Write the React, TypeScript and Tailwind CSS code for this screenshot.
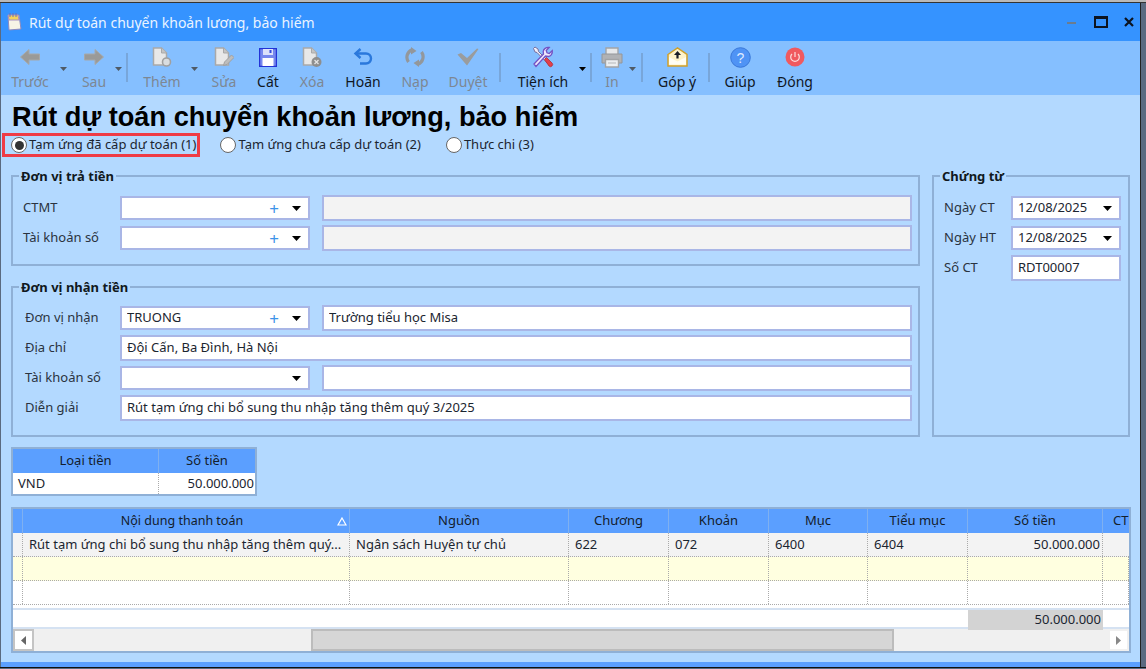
import type { ReactNode } from "react";

const FONT = "font-['Noto_Sans','Liberation_Sans',sans-serif]";

function Caret({ dim, small }: { dim?: boolean; small?: boolean }) {
  return (
    <svg width={small ? 7 : 9} height={small ? 4 : 5} viewBox="0 0 9 5" preserveAspectRatio="none">
      <path d="M0 0h9L4.500 5z" fill={dim ? "#4f5a66" : "#000"} />
    </svg>
  );
}

function ArrowLeft() {
  return (
    <svg width="20" height="16" viewBox="0 0 20 16">
      <path d="M0.500 8 9 0.500v4.500h10.500v6H9v4.500z" fill="#9a9a98" stroke="#a6a8a9" />
    </svg>
  );
}

function ArrowRight() {
  return (
    <svg width="20" height="16" viewBox="0 0 20 16">
      <path d="M19.500 8 11 0.500v4.500H0.500v6H11v4.500z" fill="#9a9a98" stroke="#a6a8a9" />
    </svg>
  );
}

function DocIcon({ badge }: { badge: "add" | "edit" | "del" }) {
  return (
    <svg width="20" height="20" viewBox="0 0 20 20">
      <path d="M1.500 1h8l5 5v12h-13z" fill="#e8e8e8" stroke="#a9a9a9" strokeWidth="1.500" />
      <path d="M9.500 1v5h5" fill="#c4c4c4" stroke="#a9a9a9" />
      {badge === "add" && <circle cx="14.500" cy="15" r="4" fill="#d9dde0" stroke="#a0a0a0" strokeWidth="1.600" />}
      {badge === "edit" && <path d="m9.500 18.500 1-3.500 7-7 2.500 2.500-7 7z" fill="#bdbdbd" stroke="#a0a0a0" />}
      {badge === "del" && (
        <>
          <circle cx="14.500" cy="15" r="5" fill="#8e8e8e" />
          <path d="m12.500 13 4 4m0-4-4 4" stroke="#e3e3e3" strokeWidth="1.300" />
        </>
      )}
    </svg>
  );
}

function SaveIcon() {
  return (
    <svg width="18" height="19" viewBox="0 0 18 19">
      <path d="M0.500 0.500h17v18h-17z" fill="#7688ee" stroke="#2333d6" strokeWidth="1.400" />
      <path d="M4 1h10v6H4z" fill="#dbe1fa" />
      <path d="M10.500 2h2v3h-2z" fill="#3348dc" />
      <path d="M3.500 10h11v8h-11z" fill="#fff" />
    </svg>
  );
}

function UndoIcon() {
  return (
    <svg width="21" height="18" viewBox="0 0 21 18" fill="none">
      <path d="M3 5.500h10a5 5 0 0 1 0 10H7" stroke="#2a78dc" strokeWidth="2.400" />
      <path d="M7.500 1 2.500 5.500 7.500 10" stroke="#2a78dc" strokeWidth="2.400" />
    </svg>
  );
}

function ReloadIcon() {
  return (
    <svg width="20" height="20" viewBox="0 0 20 20" fill="none">
      <path d="M3.500 15A8 8 0 0 1 7 2.800" stroke="#93979b" strokeWidth="3.200" />
      <path d="M16.500 5A8 8 0 0 1 13 17.200" stroke="#93979b" strokeWidth="3.200" />
      <path d="M6 0v7.500l5.500-3.500zM14 20v-7.500L8.500 16z" fill="#93979b" />
    </svg>
  );
}

function CheckIcon() {
  return (
    <svg width="22" height="18" viewBox="0 0 22 18">
      <path d="M0.500 6.500 4 5l6 5L20 0.500l1.500 0.500L10 17.500z" fill="#9a9c9d" />
    </svg>
  );
}

function ToolsIcon() {
  return (
    <svg width="22" height="22" viewBox="0 0 22 22" fill="none">
      <path d="M1.500 2.500 3 1l3 2 .5 2.500L19 18l-1.500 1.500L5 6.500 3 6z" fill="#f2effb" stroke="#77709f" strokeWidth="1" />
      <path d="m12.500 13.500 2-2 5.500 5.500a2 2 0 0 1-3 3z" fill="#e2404b" stroke="#b32c38" strokeWidth=".8" />
      <path d="m2 18 9.500-10 -.3-2.500c.3-2.500 3-4.500 6-4l-3 3 .8 2.300 2.300.7 3-3c.5 3-1.500 5.700-4 6L13.500 10 4 20.500z" fill="#efe9fd" stroke="#7352c4" strokeWidth="1.300" />
    </svg>
  );
}

function PrinterIcon() {
  return (
    <svg width="22" height="21" viewBox="0 0 22 21">
      <path d="M5 1h12v7H5z" fill="#e6e8ea" stroke="#a2a4a6" strokeWidth="1.400" />
      <path d="M1 7h20v9H1z" fill="#b0b2b5" stroke="#94969a" />
      <path d="M4.500 12.500h13V20h-13z" fill="#eceef0" stroke="#a2a4a6" strokeWidth="1.400" />
      <path d="M7 16h8" stroke="#b5b7ba" />
    </svg>
  );
}

function MailIcon() {
  return (
    <svg width="21" height="20" viewBox="0 0 21 20">
      <path d="M1 7.500 10.500 1 20 7.500V19H1z" fill="#fff3c9" stroke="#cfa02c" strokeWidth="1.500" />
      <path d="M2 17.500V10l8.500 4.500L19 10v7.500z" fill="#fffdf4" />
      <path d="M10.500 4 7 8h2.400v3.500h2.200V8H14z" fill="#1a1d26" />
    </svg>
  );
}

function HelpIcon() {
  return (
    <svg width="21" height="21" viewBox="0 0 21 21">
      <circle cx="10.500" cy="10.500" r="9.800" fill="#4f93f5" stroke="#3a78d8" />
      <text x="10.500" y="15.500" textAnchor="middle" fontSize="14" fill="#dfeaff" fontFamily="Liberation Sans">?</text>
    </svg>
  );
}

function PowerIcon() {
  return (
    <svg width="20" height="20" viewBox="0 0 20 20" fill="none">
      <circle cx="10" cy="10" r="9.500" fill="#f0595f" />
      <path d="M7 7a4.300 4.300 0 1 0 6 0M10 5v5" stroke="#fbdcdc" strokeWidth="1.200" />
    </svg>
  );
}

function Tool({
  label,
  icon,
  className,
  dim,
}: {
  label: string;
  icon: ReactNode;
  className: string;
  dim?: boolean;
}) {
  return (
    <div className={`flex shrink-0 flex-col items-center ${className}`}>
      <div className="flex h-[24px] items-center justify-center">{icon}</div>
      <div className={`mt-[3px] whitespace-nowrap text-[14px] leading-[20px] ${dim ? "text-[#7d8793]" : "text-[#10171f]"}`}>
        {label}
      </div>
    </div>
  );
}

function ToolCaret({ className, dim }: { className: string; dim?: boolean }) {
  return (
    <div className={`flex h-[8px] shrink-0 items-center justify-center self-start mt-[20px] ${className}`}>
      <Caret dim={dim} small />
    </div>
  );
}

function Sep({ className }: { className: string }) {
  return <div className={`h-[29px] w-[2px] shrink-0 self-start mt-[8px] bg-[#78a6da] ${className}`} />;
}

function Toolbar() {
  return (
    <div className="flex h-[54px] bg-[#85bfff] pt-[4px] pl-[3px]">
      <Tool label="Trước" icon={<ArrowLeft />} dim className="w-[52px]" />
      <ToolCaret dim className="w-[14px]" />
      <Tool label="Sau" icon={<ArrowRight />} dim className="ml-[7px] w-[34px]" />
      <ToolCaret dim className="w-[14px]" />
      <Sep className="ml-[1px]" />
      <Tool label="Thêm" icon={<DocIcon badge="add" />} dim className="ml-[9px] w-[50px]" />
      <ToolCaret dim className="w-[14px]" />
      <Tool label="Sửa" icon={<DocIcon badge="edit" />} dim className="w-[46px]" />
      <Tool label="Cất" icon={<SaveIcon />} className="w-[42px]" />
      <Tool label="Xóa" icon={<DocIcon badge="del" />} dim className="w-[46px]" />
      <Tool label="Hoãn" icon={<UndoIcon />} className="w-[56px]" />
      <Tool label="Nạp" icon={<ReloadIcon />} dim className="w-[48px]" />
      <Tool label="Duyệt" icon={<CheckIcon />} dim className="w-[58px]" />
      <Sep className="ml-[2px]" />
      <Tool label="Tiện ích" icon={<ToolsIcon />} className="ml-[8px] w-[68px]" />
      <ToolCaret className="w-[10px]" />
      <Sep className="ml-[3px]" />
      <Tool label="In" icon={<PrinterIcon />} dim className="ml-[7px] w-[26px]" />
      <ToolCaret dim className="w-[14px]" />
      <Sep className="ml-[2px]" />
      <Tool label="Góp ý" icon={<MailIcon />} className="ml-[6px] w-[56px]" />
      <Sep className="ml-[3px]" />
      <Tool label="Giúp" icon={<HelpIcon />} className="w-[60px]" />
      <Tool label="Đóng" icon={<PowerIcon />} className="ml-[2px] w-[46px]" />
    </div>
  );
}

function Radio({ label, checked, className }: { label: string; checked?: boolean; className?: string }) {
  return (
    <div className={`flex items-center ${className ?? ""}`}>
      <span className="flex h-[16px] w-[16px] shrink-0 items-center justify-center rounded-full border-[1.500px] border-[#666] bg-white">
        {checked && <span className="h-[9px] w-[9px] rounded-full bg-[#333]" />}
      </span>
      <span className="ml-[2px] -mt-[2px] whitespace-nowrap text-[13px] leading-[18px] text-[#1b2530]">{label}</span>
    </div>
  );
}

function Field({
  value,
  className,
  disabled,
  plus,
  caret,
}: {
  value?: string;
  className: string;
  disabled?: boolean;
  plus?: boolean;
  caret?: boolean;
}) {
  return (
    <div
      className={`flex shrink-0 items-center border-2 border-[#a9b6e6] pl-[5px] text-[13px] text-[#1b2530] ${
        disabled ? "bg-[#f3f3f3]" : "bg-white"
      } ${className}`}
    >
      <span className="flex-1 truncate">{value}</span>
      {plus && <span className="mr-[13px] text-[17px] leading-none text-[#3c94e8]">+</span>}
      {caret && (
        <span className="mr-[7px] flex items-center">
          <Caret />
        </span>
      )}
    </div>
  );
}

function Group({ title, className, children }: { title: string; className: string; children: ReactNode }) {
  return (
    <fieldset className={`border-2 border-[#8fb0d6] ${className}`}>
      <legend className="ml-[6px] px-[2px] text-[13px] font-bold leading-[18px] text-[#101820]">{title}</legend>
      {children}
    </fieldset>
  );
}

function FormRow({ label, className, children }: { label: string; className: string; children: ReactNode }) {
  return (
    <div className={`flex items-center ${className}`}>
      <div className="w-[97px] shrink-0 text-[13px] text-[#2a3340]">{label}</div>
      {children}
    </div>
  );
}

const gridCols = "grid grid-cols-[10px_327px_219px_100px_100px_99px_100px_135px_1fr]";
const headCell = "flex items-center justify-center border-r border-[#7fb0f0] text-[13px] text-[#14202c]";
const cell = "flex items-center truncate border-r border-dotted border-[#aaa] px-[6px] text-[13px] text-[#1b2530]";
const rowLine = "h-[24px] border-b border-dotted border-[#aaa]";

function EmptyRow({ bg }: { bg: string }) {
  return (
    <div className={`${gridCols} ${rowLine} ${bg}`}>
      {Array.from({ length: 9 }).map((_, i) => (
        <div key={i} className="border-r border-dotted border-[#aaa]" />
      ))}
    </div>
  );
}

function DetailGrid() {
  return (
    <div className="mt-[11px] w-[1120px] border-2 border-[#8fb0d6] bg-white">
      <div className={`${gridCols} h-[24px] bg-[#5b9fff]`}>
        <div className={headCell} />
        <div className={`${headCell} relative pr-[8px]`}>
          <span className="text-[12.500px]">Nội dung thanh toán</span>
          <svg className="absolute right-[2px] top-[8px]" width="10" height="9" viewBox="0 0 10 9">
            <path d="M5 1 9 8H1z" fill="#5b9fff" stroke="#fff" strokeWidth="1.200" />
          </svg>
        </div>
        <div className={headCell}>Nguồn</div>
        <div className={headCell}>Chương</div>
        <div className={headCell}>Khoản</div>
        <div className={headCell}>Mục</div>
        <div className={headCell}>Tiểu mục</div>
        <div className={headCell}>Số tiền</div>
        <div className={`${headCell} justify-start border-r-0 pl-[10px]`}>CT</div>
      </div>
      <div className={`${gridCols} ${rowLine} bg-[#f3f3f3]`}>
        <div className="border-r border-dotted border-[#aaa]" />
        <div className={cell}>Rút tạm ứng chi bổ sung thu nhập tăng thêm quý...</div>
        <div className={cell}>Ngân sách Huyện tự chủ</div>
        <div className={cell}>622</div>
        <div className={cell}>072</div>
        <div className={cell}>6400</div>
        <div className={cell}>6404</div>
        <div className={`${cell} justify-end pr-[2px]`}>50.000.000</div>
        <div />
      </div>
      <EmptyRow bg="bg-[#ffffe0]" />
      <EmptyRow bg="bg-white" />
      <div className="h-[5px] border-b-2 border-[#d5e2f2] bg-white" />
      <div className={`${gridCols} h-[19px] border-b-2 border-[#d5e2f2]`}>
        <div className="col-span-7" />
        <div className="flex items-center justify-end bg-[#d3d3d3] pr-[2px] text-[13px] text-[#1b2530]">50.000.000</div>
        <div />
      </div>
      <div className="flex h-[22px] items-stretch bg-[#f0f0f0]">
        <div className="flex w-[21px] items-center justify-center border-2 border-[#c4c4c4] bg-white">
          <svg width="5" height="9" viewBox="0 0 5 9">
            <path d="M5 0v9L0 4.500z" fill="#666" />
          </svg>
        </div>
        <div className="ml-[277px] w-[583px] border-2 border-[#bcbcbc] bg-[#d6d6d6]" />
        <div className="flex-1" />
        <div className="flex w-[21px] items-center justify-center border-2 border-[#f0f0f0] bg-white">
          <svg width="5" height="9" viewBox="0 0 5 9">
            <path d="M0 0v9l5-4.500z" fill="#888" />
          </svg>
        </div>
      </div>
    </div>
  );
}

function TitleBar() {
  return (
    <div className="flex h-[38px] items-center bg-[#3593ff] pl-[4px]">
      <svg width="17" height="20" viewBox="0 0 17 20">
        <path d="M3 4 14 3l2 14-12 1z" fill="#f6f4e6" stroke="#8b8ac0" />
        <path d="M3 3h10l1 5H4z" fill="#f3d35c" stroke="#a78fc4" />
        <path d="M5 1v4M8 1v4M11 1v4" stroke="#6f6fb0" />
      </svg>
      <span className="ml-[7px] text-[14px] text-[#eaf3ff]">Rút dự toán chuyển khoản lương, bảo hiểm</span>
      <div className="ml-auto flex items-center pr-[6px]">
        <div className="mr-[18px] mt-[1px] h-[2px] w-[9px] bg-[#6b7c8f]" />
        <div className="mr-[16px] h-[12px] w-[14px] border-2 border-t-[3px] border-[#0c1420]" />
        <svg width="10" height="10" viewBox="0 0 10 10">
          <path d="m1 1 8 8m0-8-8 8" stroke="#0c1420" strokeWidth="2.200" />
        </svg>
      </div>
    </div>
  );
}

export default function App() {
  return (
    <div className={`h-[669px] w-[1146px] overflow-hidden bg-[#5a6a80] ${FONT}`}>
      <div className="h-[3px] border-b border-[#333] bg-[#b9b9b9]" />
      <div className="ml-[1px] w-[1140px] border-r border-[#222]">
        <TitleBar />
        <Toolbar />
        <div className="h-[567px] bg-[#b3d9ff] pl-[10px] pr-[9px] pt-[6px]">
          <div className="ml-[1px] whitespace-nowrap font-['Liberation_Sans',sans-serif] text-[27.200px] font-bold leading-[32px] text-black">
            Rút dự toán chuyển khoản lương, bảo hiểm
          </div>
          <div className="-ml-[9px] flex items-center">
            <div className="flex h-[24px] items-center border-[3px] border-[#ef3b45] pl-[6px] pr-[1px]">
              <Radio label="Tạm ứng đã cấp dự toán (1)" checked />
            </div>
            <Radio label="Tạm ứng chưa cấp dự toán (2)" className="ml-[20px]" />
            <Radio label="Thực chi (3)" className="ml-[25px]" />
          </div>

          <div className="mt-[10px] flex items-stretch">
            <div className="w-[909px] shrink-0">
              <Group title="Đơn vị trả tiền" className="h-[99px] pt-[10px]">
                <FormRow label="CTMT" className="h-[26px] pl-[10px]">
                  <Field plus caret className="h-[24px] w-[190px]" />
                  <Field disabled className="ml-[12px] h-[26px] w-[590px]" />
                </FormRow>
                <FormRow label="Tài khoản số" className="mt-[4px] h-[26px] pl-[10px]">
                  <Field plus caret className="h-[24px] w-[190px]" />
                  <Field disabled className="ml-[12px] h-[26px] w-[590px]" />
                </FormRow>
              </Group>
              <Group title="Đơn vị nhận tiền" className="mt-[12px] h-[159px] pt-[9px]">
                <FormRow label="Đơn vị nhận" className="h-[26px] pl-[12px]">
                  <Field value="TRUONG" plus caret className="-ml-[2px] h-[24px] w-[190px]" />
                  <Field value="Trường tiểu học Misa" className="ml-[12px] h-[26px] w-[590px]" />
                </FormRow>
                <FormRow label="Địa chỉ" className="mt-[4px] h-[26px] pl-[12px]">
                  <Field value="Đội Cấn, Ba Đình, Hà Nội" className="-ml-[2px] h-[26px] w-[792px]" />
                </FormRow>
                <FormRow label="Tài khoản số" className="mt-[4px] h-[26px] pl-[12px]">
                  <Field caret className="-ml-[2px] h-[24px] w-[190px]" />
                  <Field className="ml-[12px] h-[26px] w-[590px]" />
                </FormRow>
                <FormRow label="Diễn giải" className="mt-[4px] h-[26px] pl-[12px]">
                  <Field
                    value="Rút tạm ứng chi bổ sung thu nhập tăng thêm quý 3/2025"
                    className="-ml-[2px] h-[26px] w-[792px]"
                  />
                </FormRow>
              </Group>
            </div>
            <Group title="Chứng từ" className="ml-[12px] h-[270px] w-[198px] pt-[11px]">
              <div className="flex h-[24px] items-center pl-[10px]">
                <div className="w-[67px] text-[13px] text-[#2a3340]">Ngày CT</div>
                <Field value="12/08/2025" caret className="h-[24px] w-[110px]" />
              </div>
              <div className="mt-[6px] flex h-[24px] items-center pl-[10px]">
                <div className="w-[67px] text-[13px] text-[#2a3340]">Ngày HT</div>
                <Field value="12/08/2025" caret className="h-[24px] w-[110px]" />
              </div>
              <div className="mt-[5px] flex h-[26px] items-center pl-[10px]">
                <div className="w-[67px] text-[13px] text-[#2a3340]">Số CT</div>
                <Field value="RDT00007" className="h-[26px] w-[110px]" />
              </div>
            </Group>
          </div>

          <div className="mt-[10px] w-[246px] border-2 border-[#8fb0d6] bg-white">
            <div className="grid h-[24px] grid-cols-[146px_1fr] bg-[#5b9fff]">
              <div className={headCell}>Loại tiền</div>
              <div className={`${headCell} border-r-0`}>Số tiền</div>
            </div>
            <div className="grid h-[21px] grid-cols-[146px_1fr]">
              <div className="flex items-center border-r border-dotted border-[#aaa] pl-[5px] text-[13px] text-[#1b2530]">VND</div>
              <div className="flex items-center justify-end pr-[1px] text-[13px] text-[#1b2530]">50.000.000</div>
            </div>
          </div>

          <DetailGrid />
        </div>
        <div className="h-[5px] bg-[#5b9fff]" />
      </div>
      <div className="h-[1px] bg-[#111]" />
    </div>
  );
}
